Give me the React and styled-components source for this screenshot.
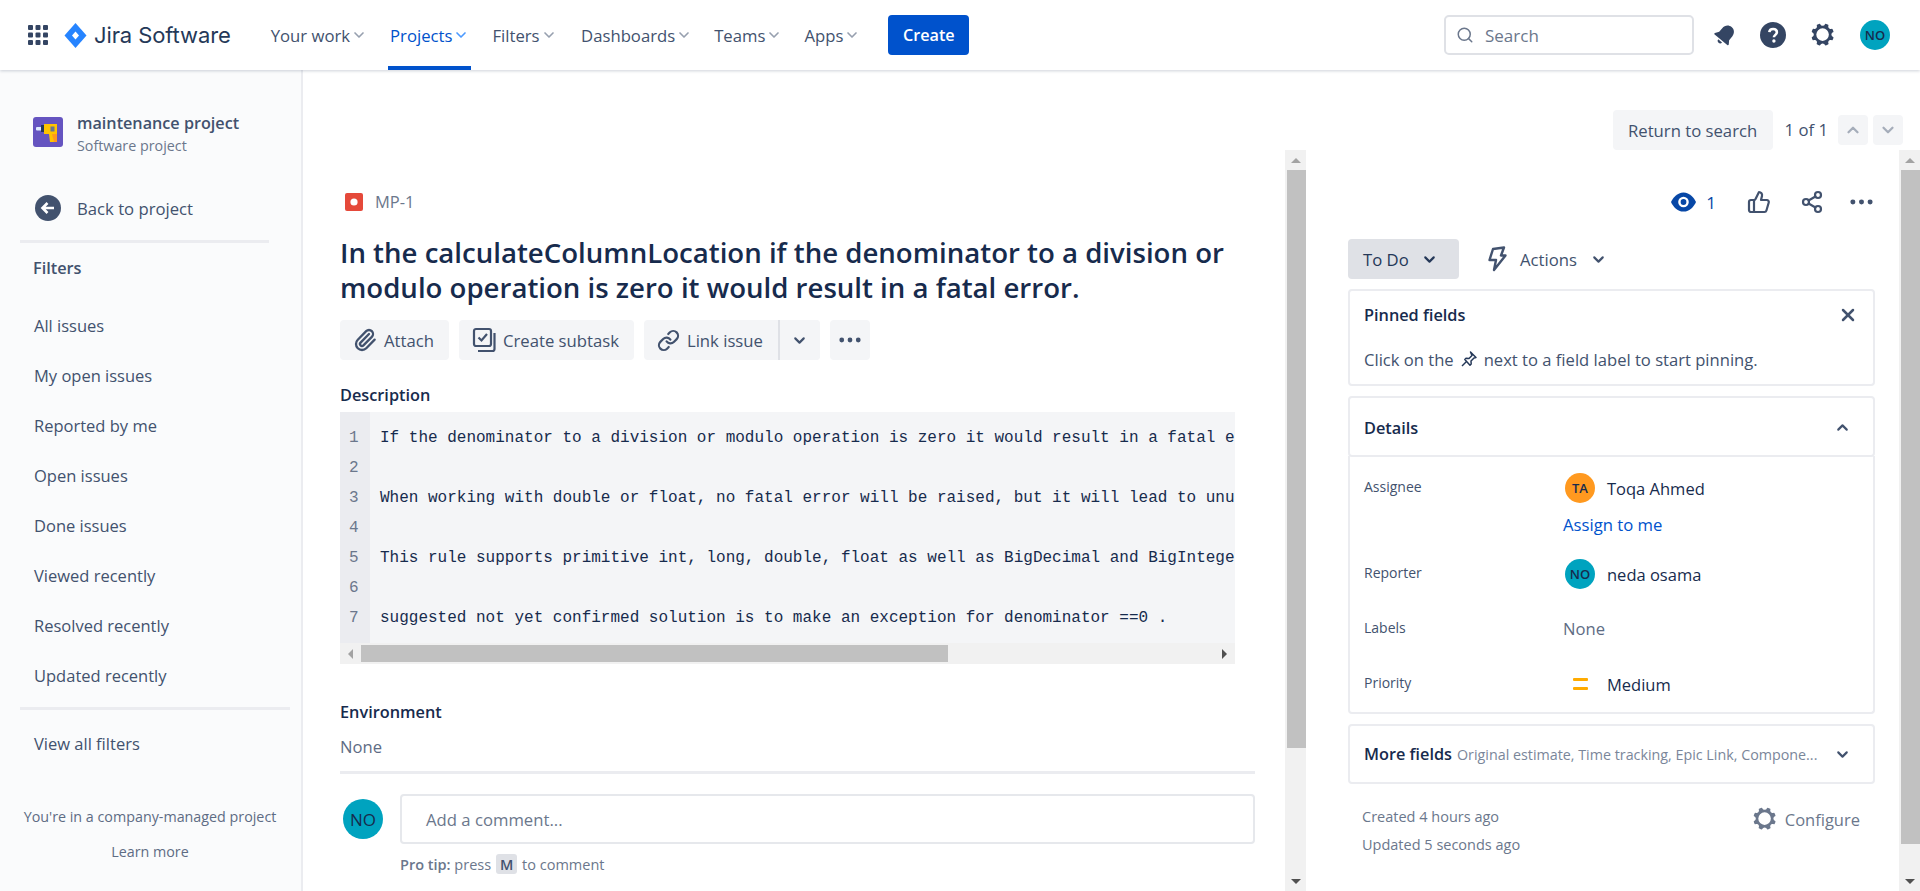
import React from "react";
import styled, { createGlobalStyle } from "styled-components";
import { ChevronDown, ChevronUp, Search, Paperclip, Link, ThumbsUp, Share2, X } from "lucide-react";

const Global = createGlobalStyle`
  html, body { margin: 0; padding: 0; height: 891px; overflow: hidden; background: #fff; }
  body { font-family: "Open Sans", "Noto Sans", sans-serif; color: #172b4d; }
  * { box-sizing: border-box; }
`;

const Page = styled.div`display: flex; flex-direction: column; width: 1920px; height: 891px; overflow: hidden;`;

/* Top bar */
const TopBar = styled.header`
  height: 70px; flex: none; display: flex; align-items: center; padding: 0 30px 0 28px;
  background: #fff; box-shadow: 0 1px 3px rgba(9,30,66,.2); position: relative; z-index: 2;
`;
const LogoText = styled.span`font: 400 22px "Inter", sans-serif; letter-spacing: -.1px; color: #253858; margin-left: 7px;`;
const Nav = styled.nav`display: flex; align-self: stretch; margin-left: 38px;`;
const NavItem = styled.div`
  display: flex; align-items: center; height: 70px; padding: 0 2px; margin-right: ${p => p.$gap}px; font-size: 16.7px;
  color: ${p => (p.$active ? "#0052cc" : "#42526e")}; font-weight: 500;
  border-bottom: 4px solid ${p => (p.$active ? "#0052cc" : "transparent")}; padding-top: 4px;
  svg { color: ${p => (p.$active ? "#4c9aff" : "#97a0af")}; margin-left: 1px; }
`;
const CreateButton = styled.button`
  width: 81px; height: 40px; margin-left: 26px; border: 0; border-radius: 4px; background: #0052cc; color: #fff;
  font: 600 16.2px "Open Sans", sans-serif;
`;
const SearchBox = styled.div`
  margin-left: auto; width: 250px; height: 40px; border: 2px solid #dfe1e6; border-radius: 5px; display: flex; align-items: center;
  padding-left: 10px; gap: 11px; color: #6b778c; font-size: 17px;
`;
const HeaderIcons = styled.div`display: flex; align-items: center; margin-left: 18px; gap: 22px;`;
const Avatar = styled.div`
  width: 30px; height: 30px; flex: none; border-radius: 50%; background: ${p => p.$bg || "#00a3bf"}; color: #172b4d;
  display: flex; align-items: center; justify-content: center; font-size: ${p => p.$size || 13}px; font-weight: 600;
`;

/* Body */
const Body = styled.div`flex: 1; display: flex; min-height: 0;`;
const Sidebar = styled.aside`
  width: 303px; flex: none; background: #fafbfc; border-right: 2px solid #ebecf0; padding: 47px 0 0 20px; display: flex; flex-direction: column;
`;
const ProjectHead = styled.div`display: flex; gap: 14px; padding-left: 13px; align-items: flex-start;`;
const ProjectName = styled.div`font-size: 16.2px; font-weight: 600; color: #42526e; line-height: 20px; margin-top: -4px;`;
const ProjectSub = styled.div`font-size: 14.3px; color: #6b778c; line-height: 20px; margin-top: 3px;`;
const BackRow = styled.div`display: flex; align-items: center; gap: 16px; margin: 39px 0 0 15px; height: 26px; font-size: 16.7px; color: #42526e;`;
const SideDivider = styled.div`height: 3px; background: #ebecf0; width: ${p => p.$w}px; margin-top: ${p => p.$top}px; flex: none;`;
const FiltersTitle = styled.div`font-size: 16.3px; font-weight: 600; color: #42526e; margin: 14px 0 0 13px; line-height: 22px;`;
const FilterList = styled.div`margin: 21px 0 0 14px; display: flex; flex-direction: column;`;
const FilterItem = styled.div`height: 50px; display: flex; align-items: center; font-size: 16.5px; color: #42526e;`;
const ViewAll = styled(FilterItem)`margin: 8px 0 0 14px; height: 50px;`;
const Managed = styled.div`width: 260px; margin-top: 31px; text-align: center; font-size: 14.3px; color: #5e6c84; line-height: 35px; white-space: nowrap;`;

const Main = styled.main`flex: 1; display: flex; flex-direction: column; min-width: 0;`;
const IssueNavBar = styled.div`height: 80px; flex: none; display: flex; align-items: flex-end; justify-content: flex-end; padding-right: 17px;`;
const ReturnButton = styled.button`
  width: 160px; height: 40px; border: 0; border-radius: 4px; background: #f4f5f7; color: #42526e;
  font: 500 16.7px "Open Sans", sans-serif;
`;
const PageCount = styled.div`font-size: 16.7px; color: #42526e; margin: 0 10px 8px 12px; line-height: 24px;`;
const PagerButton = styled.div`
  width: 30px; height: 30px; margin: 0 0 5px ${p => p.$left}px; border-radius: 4px; background: #f4f5f7; color: #a5adba;
  display: flex; align-items: center; justify-content: center;
`;
const Columns = styled.div`flex: 1; display: flex; min-height: 0;`;
const LeftPane = styled.section`width: 982px; flex: none; padding: 0 30px 0 37px; overflow: hidden;`;
const RightPane = styled.section`width: 593px; flex: none; padding: 0 24px 0 42px; overflow: hidden;`;

const ScrollTrack = styled.div`
  width: 21px; flex: none; background: #f1f1f1; display: flex; flex-direction: column; align-items: flex-end;
`;
const ArrowBox = styled.div`height: 20px; width: 100%; display: flex; align-items: center; justify-content: center; flex: none;`;
const ThumbV = styled.div`width: 19px; background: #c1c1c1; flex: none; height: ${p => p.$h}px;`;
const Spacer = styled.div`flex: 1;`;
const ArrowUp = styled.div`width: 0; height: 0; border: 5px solid transparent; border-top: 0; border-bottom: 5px solid ${p => p.$c || "#505050"};`;
const ArrowDown = styled.div`width: 0; height: 0; border: 5px solid transparent; border-bottom: 0; border-top: 5px solid #505050;`;

const KeyRow = styled.div`display: flex; align-items: center; gap: 12px; margin: 43px 0 0 5px; height: 17px; font-size: 16.5px; color: #6b778c;`;
const Title = styled.h1`
  margin: 25px 0 0; font-size: 27.6px; font-weight: 600; line-height: 35px; color: #172b4d; width: 900px;
`;
const ActionRow = styled.div`display: flex; gap: 10px; margin-top: 15px;`;
const ActionButton = styled.div`
  height: 40px; padding: 0 15px 0 13px; display: flex; align-items: center; gap: 7px; background: #f4f5f7; border-radius: 4px;
  color: #42526e; font-weight: 500; font-size: 16.7px; white-space: nowrap;
`;
const SplitGroup = styled.div`display: flex; background: #f4f5f7; border-radius: 4px;`;
const SplitMain = styled(ActionButton)`border-right: 2px solid #dfe1e6; border-radius: 4px 0 0 4px; background: transparent;`;
const SquareButton = styled.div`width: ${p => p.$w}px; height: 40px; display: flex; align-items: center; justify-content: center; background: #f4f5f7; border-radius: 4px; color: #42526e;`;
const SectionLabel = styled.div`font-size: 16.3px; font-weight: 600; color: #172b4d; line-height: 22px; margin-top: ${p => p.$top}px;`;
const CodeBlock = styled.div`width: 895px; margin-top: 6px; background: #f4f5f7; display: flex; flex-direction: column;`;
const CodeBody = styled.div`display: flex; height: 231px; overflow: hidden;`;
const Gutter = styled.div`width: 30px; flex: none; background: #ebecf0; padding-top: 11px; color: #6b778c;`;
const GutterNum = styled.div`height: 30px; font: 16px/30px "Liberation Mono", monospace; padding-left: 9px;`;
const CodeLines = styled.div`padding: 11px 0 0 10px; overflow: hidden; flex: 1;`;
const CodeLine = styled.div`height: 30px; font: 16px/30px "Liberation Mono", monospace; color: #172b4d; white-space: pre;`;
const HScroll = styled.div`height: 21px; background: #f1f1f1; display: flex; align-items: center;`;
const HArrow = styled.div`width: 21px; display: flex; justify-content: center; flex: none;`;
const ArrowLeft = styled.div`width: 0; height: 0; border: 5px solid transparent; border-left: 0; border-right: 5px solid #a3a3a3;`;
const ArrowRight = styled.div`width: 0; height: 0; border: 5px solid transparent; border-right: 0; border-left: 5px solid #505050;`;
const ThumbH = styled.div`height: 17px; width: 587px; background: #c1c1c1;`;
const NoneText = styled.div`font-size: 16.6px; color: #5e6c84; line-height: 22px; margin-top: 13px;`;
const ThinRule = styled.div`height: 3px; background: #ebecf0; margin-top: 13px;`;
const CommentRow = styled.div`display: flex; margin-top: 20px;`;
const CommentAvatarSlot = styled.div`width: 60px; padding: 5px 0 0 3px; flex: none;`;
const CommentAvatar = styled(Avatar)`width: 40px; height: 40px; font-size: 17px; font-weight: 500;`;
const CommentInput = styled.div`flex: 1; height: 50px; border: 2px solid #e6e8ec; border-radius: 4px; display: flex; align-items: center; padding-left: 24px; font-size: 16.7px; color: #6b778c;`;
const ProTip = styled.div`margin: 10px 0 0 60px; display: flex; align-items: center; gap: 5px; font-size: 14.5px; color: #6b778c;`;
const Strong = styled.b`font-weight: 600;`;
const KeyCap = styled.span`background: #dfe1e6; color: #42526e; font-weight: 600; height: 20px; width: 21px; border-radius: 3px; display: inline-flex; align-items: center; justify-content: center;`;

const SocialRow = styled.div`display: flex; align-items: center; height: 30px; margin-top: 37px; justify-content: flex-end; padding-right: 2px;`;
const WatchCount = styled.span`font-size: 17px; color: #0747a6; margin: 0 31px 0 10px;`;
const StatusRow = styled.div`display: flex; align-items: center; margin-top: 22px;`;
const StatusButton = styled.div`width: 111px; height: 40px; border-radius: 4px; background: #dfe1e6; display: flex; align-items: center; gap: 12px; padding-left: 15px; color: #253858; font-weight: 500; font-size: 16.7px;`;
const ActionsButton = styled.div`display: flex; align-items: center; margin-left: 28px; color: #42526e; font-weight: 500; font-size: 16.7px; gap: 13px;`;
const Panel = styled.div`border: 2px solid #ebecf0; border-radius: 4px; margin-top: ${p => p.$top}px;`;
const PanelHead = styled.div`display: flex; align-items: center; justify-content: space-between; height: ${p => p.$h}px; padding: ${p => p.$pt || 0}px ${p => p.$pr || 15}px 0 14px;`;
const PanelTitle = styled.div`font-size: 16.3px; font-weight: 600; color: #172b4d; white-space: nowrap;`;
const PanelText = styled.div`display: flex; align-items: center; gap: 6px; padding: 0 14px; height: 24px; margin-top: 8px; margin-bottom: 13px; font-size: 16.6px; color: #42526e; white-space: nowrap;`;
const DetailsPanel = styled.div`border: 2px solid #ebecf0; border-top: 0; border-radius: 0 0 4px 4px; margin-top: -1px; height: 258px; padding-top: 18px;`;
const FieldRow = styled.div`display: flex; height: ${p => p.$h}px; padding-left: 14px;`;
const FieldLabel = styled.div`width: 199px; flex: none; font-size: 14px; font-weight: 500; color: #42526e; line-height: 24px; padding-top: 1px;`;
const FieldValue = styled.div`display: flex; align-items: center; gap: 12px; height: 30px; margin-top: -1px; padding-left: 2px; font-size: 16.5px; color: #172b4d;`;
const FieldColumn = styled.div`display: flex; flex-direction: column;`;
const AssignLink = styled.div`font-size: 16.7px; color: #0052cc; line-height: 24px; margin-top: 10px;`;
const FieldNone = styled.div`font-size: 16.6px; color: #5e6c84; line-height: 30px; margin-top: -1px;`;
const PriorityIcon = styled.div`width: 30px; height: 12px; display: flex; flex-direction: column; justify-content: space-between; align-items: center;`;
const PriorityBar = styled.div`width: 15px; height: 3px; border-radius: 1px; background: #ffab00;`;
const MoreHint = styled.span`flex: 1; font-size: 14.3px; color: #7a869a; white-space: nowrap; margin-left: 5px; overflow: hidden;`;
const FootRow = styled.div`display: flex; justify-content: space-between; padding: 19px 15px 0 14px;`;
const Stamps = styled.div`font-size: 14.5px; color: #6b778c; line-height: 28px;`;
const ConfigureLink = styled.div`display: flex; align-items: center; gap: 5px; color: #6b778c; font-size: 16.5px; font-weight: 500; margin-top: 3px; height: 26px;`;

const GEAR = "M11.701 16.7a5.002 5.002 0 110-10.003 5.002 5.002 0 010 10.004m8.368-3.117a1.995 1.995 0 01-1.346-1.885c0-.876.563-1.613 1.345-1.885a.48.48 0 00.315-.574 8.947 8.947 0 00-.836-1.993.477.477 0 00-.598-.195 2.04 2.04 0 01-1.29.08 1.988 1.988 0 01-1.404-1.395 2.04 2.04 0 01.076-1.297.478.478 0 00-.196-.597 8.98 8.98 0 00-1.975-.826.479.479 0 00-.574.314 1.995 1.995 0 01-1.885 1.346 1.994 1.994 0 01-1.884-1.345.482.482 0 00-.575-.315c-.708.2-1.379.485-2.004.842a.47.47 0 00-.198.582A2.002 2.002 0 014.445 7.06a.478.478 0 00-.595.196 8.946 8.946 0 00-.833 1.994.48.48 0 00.308.572 1.995 1.995 0 011.323 1.877c0 .867-.552 1.599-1.324 1.877a.479.479 0 00-.308.57 8.99 8.99 0 00.723 1.79.477.477 0 00.624.194c.595-.273 1.343-.264 2.104.238.117.077.225.185.302.3.527.8.512 1.58.198 2.188a.473.473 0 00.168.628 8.946 8.946 0 002.11.897.474.474 0 00.57-.313 1.995 1.995 0 011.886-1.353c.878 0 1.618.567 1.887 1.353a.475.475 0 00.57.313 8.964 8.964 0 002.084-.883.473.473 0 00.167-.631c-.318-.608-.337-1.393.191-2.195.077-.116.185-.225.302-.302.772-.511 1.527-.513 2.125-.23a.477.477 0 00.628-.19 8.925 8.925 0 00.728-1.793.478.478 0 00-.314-.573";

const Gear = ({ size = 30, color = "#344563" }) => (
  <svg width={size} height={size} viewBox="0 0 24 24"><path fill={color} fillRule="evenodd" d={GEAR} /></svg>
);
const AppGrid = () => (
  <svg width="20" height="20" viewBox="0 0 20 20" fill="#344563">
    {[0, 7.5, 15].flatMap(y => [0, 7.5, 15].map(x => <rect key={x + "-" + y} x={x} y={y} width="5" height="5" rx="1" />))}
  </svg>
);
const JiraDiamond = () => (
  <svg width="23" height="25" viewBox="0 0 23 25" style={{ marginLeft: 16 }}>
    <path fill="#2684ff" d="M11.5 0 L22.5 12.5 L11.5 25 L.5 12.5Z" />
    <path fill="#fff" d="M11.5 8.5 L15 12.5 L11.5 16.5 L8 12.5Z" />
  </svg>
);
const Bell = () => (
  <svg width="26" height="26" viewBox="0 0 24 24">
    <g transform="rotate(40 12 12)" fill="#344563">
      <path d="M12 2.5c-3.6 0-6 2.8-6 6.3v4.4L3.7 16.5c-.4.6 0 1.3.7 1.3h15.2c.7 0 1.1-.7.7-1.3L18 13.2V8.8c0-3.5-2.4-6.3-6-6.3z" />
      <path d="M9.7 19h4.6a2.3 2.3 0 01-4.6 0z" />
    </g>
  </svg>
);
const Help = () => (
  <svg width="26" height="26" viewBox="0 0 26 26">
    <circle cx="13" cy="13" r="13" fill="#344563" />
    <path d="M9.3 10.2c.2-2 1.7-3.2 3.8-3.2 2.2 0 3.8 1.3 3.8 3.2 0 2.6-3 2.7-3 5.1" fill="none" stroke="#fff" strokeWidth="2.6" />
    <circle cx="13.9" cy="19" r="1.7" fill="#fff" />
  </svg>
);
const Drill = () => (
  <svg width="30" height="30" viewBox="0 0 30 30" style={{ flex: "none" }}>
    <rect width="30" height="30" rx="3" fill="#6554c0" />
    <rect x="3" y="10" width="6" height="3.5" rx="1" fill="#deebff" />
    <rect x="8" y="8" width="4" height="7" fill="#253858" />
    <path d="M11 7h13v10h-2v8h-5l-1-8h-5z" fill="#ffc400" />
    <path d="M19 17h5v8h-3z" fill="#ff991f" />
    <rect x="17.5" y="9.5" width="4" height="5" fill="#6b778c" />
  </svg>
);
const BackCircle = () => (
  <svg width="26" height="26" viewBox="0 0 26 26" style={{ flex: "none" }}>
    <circle cx="13" cy="13" r="13" fill="#42526e" />
    <path d="M19 13H8M12.5 8L7.5 13l5 5" fill="none" stroke="#fff" strokeWidth="2.6" />
  </svg>
);
const BugIcon = () => (
  <svg width="18" height="18" viewBox="0 0 18 18" style={{ flex: "none" }}>
    <rect width="18" height="18" rx="2" fill="#e5493a" />
    <circle cx="9" cy="9" r="3.6" fill="#fff" />
  </svg>
);
const Dots = ({ color = "#42526e", w = 24 }) => (
  <svg width={w} height="6" viewBox="0 0 24 6" fill={color}>
    <circle cx="3" cy="3" r="2.6" /><circle cx="12" cy="3" r="2.6" /><circle cx="21" cy="3" r="2.6" />
  </svg>
);
const Subtask = () => (
  <svg width="24" height="26" viewBox="0 0 24 26" fill="none" stroke="#42526e" strokeWidth="2.2">
    <rect x="2" y="2" width="17" height="17" rx="2" />
    <path d="M6.5 10.5l3 3 5.5-6.5" />
    <path d="M22.5 6v16a2 2 0 01-2 2H6" />
  </svg>
);
const Eye = () => (
  <svg width="25" height="20" viewBox="0 0 26 20">
    <path fill="#0747a6" d="M13 0C6.5 0 2 5.5 0 10c2 4.5 6.5 10 13 10s11-5.5 13-10C24 5.5 19.5 0 13 0z" />
    <circle cx="13" cy="10" r="5.5" fill="#fff" />
    <circle cx="13" cy="10" r="3" fill="#0747a6" />
  </svg>
);
const Bolt = () => (
  <svg width="20" height="26" viewBox="0 0 20 26" fill="none" stroke="#42526e" strokeWidth="2.4" strokeLinejoin="round">
    <path d="M6 3l11-1.5-3 8h4.5L7 24l2-10H2.5z" />
  </svg>
);
const Pin = () => (
  <svg width="18" height="18" viewBox="0 0 18 18" fill="none" stroke="#253858" strokeWidth="1.5" strokeLinejoin="round">
    <path d="M10.5 2l5.5 5.5-2 .5-3 3 .2 3-1.2 1.2L4.8 9.5 6 8.3l3 .2 3-3z" />
    <path d="M6.5 11.5L2 16" />
  </svg>
);

const filters = ["All issues", "My open issues", "Reported by me", "Open issues", "Done issues", "Viewed recently", "Resolved recently", "Updated recently"];
const navItems = [
  ["Your work", 19],
  ["Projects", 19, true],
  ["Filters", 20.5],
  ["Dashboards", 18],
  ["Teams", 18],
  ["Apps", 0],
];
const code = [
  "If the denominator to a division or modulo operation is zero it would result in a fatal error.",
  "",
  "When working with double or float, no fatal error will be raised, but it will lead to unusual results.",
  "",
  "This rule supports primitive int, long, double, float as well as BigDecimal and BigInteger.",
  "",
  "suggested not yet confirmed solution is to make an exception for denominator ==0 .",
];

export default function App() {
  return (
    <Page>
      <Global />
      <TopBar>
        <AppGrid />
        <JiraDiamond />
        <LogoText>Jira Software</LogoText>
        <Nav>
          {navItems.map(([label, gap, active]) => (
            <NavItem key={label} $gap={gap} $active={active}>
              {label}
              <ChevronDown size={16} strokeWidth={2.5} />
            </NavItem>
          ))}
        </Nav>
        <CreateButton>Create</CreateButton>
        <SearchBox>
          <Search size={18} strokeWidth={2} />
          Search
        </SearchBox>
        <HeaderIcons>
          <Bell />
          <Help />
          <Gear />
          <Avatar>NO</Avatar>
        </HeaderIcons>
      </TopBar>
      <Body>
        <Sidebar>
          <ProjectHead>
            <Drill />
            <div>
              <ProjectName>maintenance project</ProjectName>
              <ProjectSub>Software project</ProjectSub>
            </div>
          </ProjectHead>
          <BackRow><BackCircle />Back to project</BackRow>
          <SideDivider $w={249} $top={19} />
          <FiltersTitle>Filters</FiltersTitle>
          <FilterList>
            {filters.map(f => <FilterItem key={f}>{f}</FilterItem>)}
          </FilterList>
          <SideDivider $w={270} $top={7} />
          <ViewAll>View all filters</ViewAll>
          <Managed>You're in a company-managed project<br />Learn more</Managed>
        </Sidebar>
        <Main>
          <IssueNavBar>
            <ReturnButton>Return to search</ReturnButton>
            <PageCount>1 of 1</PageCount>
            <PagerButton $left={0}><ChevronUp size={18} strokeWidth={3} /></PagerButton>
            <PagerButton $left={5}><ChevronDown size={18} strokeWidth={3} /></PagerButton>
          </IssueNavBar>
          <Columns>
            <LeftPane>
              <KeyRow><BugIcon />MP-1</KeyRow>
              <Title>In the calculateColumnLocation if the denominator to a division or modulo operation is zero it would result in a fatal error.</Title>
              <ActionRow>
                <ActionButton><Paperclip size={24} strokeWidth={2.3} />Attach</ActionButton>
                <ActionButton><Subtask />Create subtask</ActionButton>
                <SplitGroup>
                  <SplitMain><Link size={23} strokeWidth={2.3} />Link issue</SplitMain>
                  <SquareButton $w={40}><ChevronDown size={17} strokeWidth={3} /></SquareButton>
                </SplitGroup>
                <SquareButton $w={40}><Dots w={22} /></SquareButton>
              </ActionRow>
              <SectionLabel $top={24}>Description</SectionLabel>
              <CodeBlock>
                <CodeBody>
                  <Gutter>{code.map((_, i) => <GutterNum key={i}>{i + 1}</GutterNum>)}</Gutter>
                  <CodeLines>{code.map((l, i) => <CodeLine key={i}>{l}</CodeLine>)}</CodeLines>
                </CodeBody>
                <HScroll>
                  <HArrow><ArrowLeft /></HArrow>
                  <ThumbH />
                  <Spacer />
                  <HArrow><ArrowRight /></HArrow>
                </HScroll>
              </CodeBlock>
              <SectionLabel $top={37}>Environment</SectionLabel>
              <NoneText>None</NoneText>
              <ThinRule />
              <CommentRow>
                <CommentAvatarSlot><CommentAvatar>NO</CommentAvatar></CommentAvatarSlot>
                <CommentInput>Add a comment...</CommentInput>
              </CommentRow>
              <ProTip><span><Strong>Pro tip:</Strong> press</span><KeyCap>M</KeyCap><span>to comment</span></ProTip>
            </LeftPane>
            <ScrollTrack>
              <ArrowBox><ArrowUp $c="#a3a3a3" /></ArrowBox>
              <ThumbV $h={578} />
              <Spacer />
              <ArrowBox><ArrowDown /></ArrowBox>
            </ScrollTrack>
            <RightPane>
              <SocialRow>
                <Eye />
                <WatchCount>1</WatchCount>
                <ThumbsUp size={24} strokeWidth={2.2} color="#42526e" style={{ marginRight: 29 }} />
                <Share2 size={24} strokeWidth={2.2} color="#42526e" style={{ marginRight: 26 }} />
                <Dots w={23} />
              </SocialRow>
              <StatusRow>
                <StatusButton>To Do<ChevronDown size={17} strokeWidth={3} /></StatusButton>
                <ActionsButton>
                  <Bolt />
                  <span>Actions</span>
                  <ChevronDown size={17} strokeWidth={3} />
                </ActionsButton>
              </StatusRow>
              <Panel $top={10}>
                <PanelHead $h={48} $pr={15}>
                  <PanelTitle>Pinned fields</PanelTitle>
                  <X size={20} strokeWidth={3} color="#42526e" />
                </PanelHead>
                <PanelText>Click on the <Pin /> next to a field label to start pinning.</PanelText>
              </Panel>
              <Panel $top={10}>
                <PanelHead $h={57} $pr={22} $pt={2}>
                  <PanelTitle>Details</PanelTitle>
                  <ChevronUp size={17} strokeWidth={3} color="#42526e" />
                </PanelHead>
              </Panel>
              <DetailsPanel>
                <FieldRow $h={86}>
                  <FieldLabel>Assignee</FieldLabel>
                  <FieldColumn>
                    <FieldValue><Avatar $bg="#ff991f">TA</Avatar>Toqa Ahmed</FieldValue>
                    <AssignLink>Assign to me</AssignLink>
                  </FieldColumn>
                </FieldRow>
                <FieldRow $h={55}>
                  <FieldLabel>Reporter</FieldLabel>
                  <FieldValue><Avatar>NO</Avatar>neda osama</FieldValue>
                </FieldRow>
                <FieldRow $h={55}>
                  <FieldLabel>Labels</FieldLabel>
                  <FieldNone>None</FieldNone>
                </FieldRow>
                <FieldRow $h={40}>
                  <FieldLabel>Priority</FieldLabel>
                  <FieldValue><PriorityIcon><PriorityBar /><PriorityBar /></PriorityIcon>Medium</FieldValue>
                </FieldRow>
              </DetailsPanel>
              <Panel $top={10}>
                <PanelHead $h={56} $pr={22}>
                  <PanelTitle>More fields</PanelTitle>
                  <MoreHint>Original estimate, Time tracking, Epic Link, Compone...</MoreHint>
                  <ChevronDown size={17} strokeWidth={3} color="#42526e" />
                </PanelHead>
              </Panel>
              <FootRow>
                <Stamps>Created 4 hours ago<br />Updated 5 seconds ago</Stamps>
                <ConfigureLink><Gear size={30} color="#6b778c" />Configure</ConfigureLink>
              </FootRow>
            </RightPane>
            <ScrollTrack>
              <ArrowBox><ArrowUp $c="#a3a3a3" /></ArrowBox>
              <ThumbV $h={674} />
              <Spacer />
              <ArrowBox><ArrowDown /></ArrowBox>
            </ScrollTrack>
          </Columns>
        </Main>
      </Body>
    </Page>
  );
}
